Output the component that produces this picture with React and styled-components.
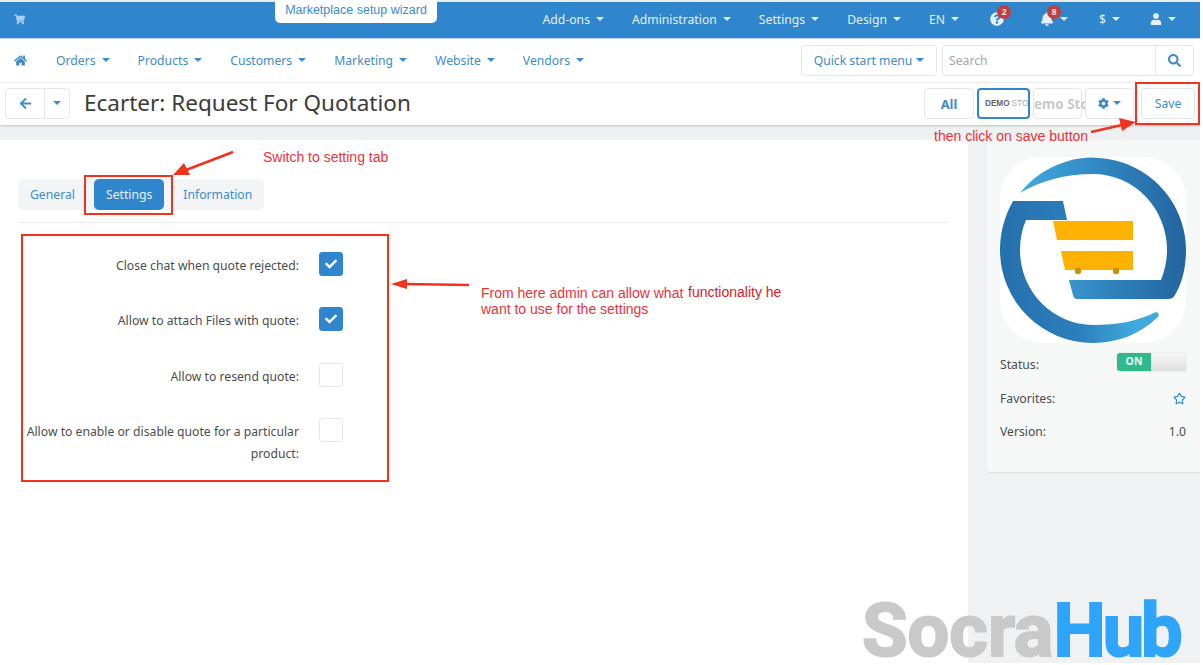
import React from 'react'
import styled, { createGlobalStyle } from 'styled-components'
import {
    FaShoppingCart,
    FaHome,
    FaArrowLeft,
    FaSearch,
    FaCog,
    FaUser,
    FaBell,
    FaQuestionCircle,
    FaCheck,
    FaRegStar,
} from 'react-icons/fa'

const blue = '#2f86cc'
const link = '#3c8ccb'
const red = '#f0321e'

const GlobalStyle = createGlobalStyle`
    html, body {
        margin: 0;
        padding: 0;
        background: #fff;
    }
    body {
        font-family: "Noto Sans", "Open Sans", sans-serif;
        font-size: 12.2px;
        color: #4a4a4a;
    }
`

const Page = styled.div`
    position: relative;
    width: 1200px;
    height: 665px;
    overflow: hidden;
    background: #fff;
`

const TopStrip = styled.div`
    height: 2px;
    background: #e8edf1;
`

const TopBar = styled.header`
    height: 37px;
    padding: 0 24px 2px 14px;
    box-sizing: border-box;
    display: flex;
    align-items: center;
    justify-content: space-between;
    background: ${blue};
    border-bottom: 1px solid #bcd7ee;
    color: #e4eff8;
`

const CartIcon = styled(FaShoppingCart)`
    color: #a8d0ef;
    font-size: 11px;
`

const TopMenu = styled.div`
    display: flex;
    align-items: center;
    gap: 28px;
`

const TopItem = styled.span`
    display: inline-flex;
    align-items: center;
    gap: 6px;
    white-space: nowrap;
    margin-right: ${props => props.$after || 0}px;
`

const Caret = styled.i`
    display: inline-block;
    width: 0;
    height: 0;
    border-left: 4px solid transparent;
    border-right: 4px solid transparent;
    border-top: 4px solid ${props => props.$color || 'currentColor'};
    margin-top: -1px;
`

const IconWrap = styled.span`
    position: relative;
    display: inline-flex;
    font-size: 14px;
`

const Badge = styled.b`
    position: absolute;
    top: -7px;
    left: 7px;
    width: 14px;
    height: 14px;
    border-radius: 50%;
    background: #bf3f3f;
    color: #f5dede;
    font-size: 9px;
    font-weight: 700;
    line-height: 14px;
    text-align: center;
`

const WizardTab = styled.div`
    position: absolute;
    left: 275px;
    top: 0;
    width: 162px;
    height: 23px;
    border-radius: 0 0 5px 5px;
    background: #fff;
    color: ${link};
    font-family: "Liberation Sans", sans-serif;
    font-size: 12.5px;
    line-height: 21px;
    text-align: center;
`

const NavBar = styled.nav`
    height: 44px;
    padding: 0 6px 0 14px;
    box-sizing: border-box;
    display: flex;
    align-items: center;
    gap: 28px;
    border-bottom: 1px solid #f0f0f0;
    color: ${link};
`

const NavItem = styled.span`
    display: inline-flex;
    align-items: center;
    gap: 6px;
    white-space: nowrap;
`

const HomeIcon = styled(FaHome)`
    font-size: 13px;
    margin-right: 1px;
`

const NavRight = styled.div`
    margin: -1px 0 0 auto;
    display: flex;
    gap: 5px;
`

const OutlineButton = styled.div`
    height: 31px;
    padding: 0 ${props => props.$pad || 12}px;
    width: ${props => (props.$width ? `${props.$width}px` : 'auto')};
    box-sizing: border-box;
    display: flex;
    align-items: center;
    justify-content: center;
    gap: 4px;
    overflow: hidden;
    white-space: nowrap;
    border: 1px solid #e4e6e8;
    border-radius: 4px;
    background: #fff;
    color: ${link};
`

const SearchBox = styled.div`
    width: 252px;
    height: 31px;
    box-sizing: border-box;
    display: flex;
    border: 1px solid #e4e6e8;
    border-radius: 4px;
`

const SearchField = styled.span`
    flex: 1;
    padding-left: 6px;
    line-height: 29px;
    color: #a5a5a5;
`

const SearchIcon = styled.span`
    width: 37px;
    display: flex;
    align-items: center;
    justify-content: center;
    border-left: 1px solid #e4e6e8;
    color: ${link};
    font-size: 13px;
`

const ToolBar = styled.div`
    height: 42px;
    box-sizing: border-box;
    padding: 0 5px 1px 5px;
    display: flex;
    align-items: center;
    box-shadow: 0 1px 2px rgba(0, 0, 0, 0.2);
    position: relative;
`

const BackGroup = styled.div`
    width: 65px;
    height: 31px;
    box-sizing: border-box;
    display: flex;
    border: 1px solid #e4e6e8;
    border-radius: 4px;
    color: ${link};
`

const BackPart = styled.span`
    flex: ${props => props.$grow};
    display: flex;
    align-items: center;
    justify-content: center;
    font-size: 13px;
    border-left: ${props => (props.$divided ? '1px solid #e4e6e8' : '0')};
`

const Title = styled.h1`
    margin: 0 0 3px 14px;
    font-size: 22.5px;
    font-weight: 400;
    color: #3b3b3b;
    white-space: nowrap;
`

const ToolActions = styled.div`
    margin-left: auto;
    display: flex;
    gap: 3px;
`

const AllLabel = styled.b`
    font-size: 13px;
    font-weight: 700;
`

const DemoLogo = styled(OutlineButton)`
    border: 2px solid ${blue};
    padding: 0 0 0 6px;
    justify-content: flex-start;
    gap: 2px;
    font-family: "Liberation Sans", sans-serif;
    font-size: 8.2px;
    font-weight: 700;
    color: #666;
`

const DemoFade = styled.span`
    font-weight: 400;
    color: #aaa;
`

const DemoWide = styled(OutlineButton)`
    padding: 0;
    justify-content: flex-start;
    overflow: visible;
    font-size: 13.5px;
    font-weight: 700;
    color: #c9c9c9;
`

const SaveButton = styled(OutlineButton)`
    margin-left: 4px;
`

const Band = styled.div`
    height: 15px;
    background: #eef0f1;
`

const Body = styled.div`
    display: flex;
    height: 523px;
`

const Main = styled.main`
    width: 968px;
    box-sizing: border-box;
    padding: 39px 20px 0 18px;
`

const Tabs = styled.div`
    display: inline-flex;
    align-items: center;
    height: 31px;
    border-radius: 5px;
    background: #f3f4f5;
`

const Tab = styled.span`
    height: 31px;
    padding: 0 12px;
    display: flex;
    align-items: center;
    border-radius: 5px;
    color: ${props => (props.$active ? '#e6f0f9' : link)};
    background: ${props => (props.$active ? blue : 'transparent')};
    margin-right: ${props => (props.$active ? 7 : 0)}px;
    margin-left: ${props => (props.$active ? 7 : 0)}px;
`

const Divider = styled.hr`
    margin: 12px 0 0;
    border: 0;
    border-top: 1px solid #e9eaeb;
`

const Form = styled.div`
    margin-top: 29px;
    width: 325px;
    display: flex;
    flex-direction: column;
    gap: 30.3px;
`

const Row = styled.div`
    display: grid;
    grid-template-columns: 276px 24px;
    column-gap: 20px;
    margin-left: 5px;
`

const Label = styled.label`
    text-align: right;
    line-height: 22px;
    color: #4d4d4d;
    margin-top: 3px;
`

const Check = styled.span`
    width: 24px;
    height: 24px;
    box-sizing: border-box;
    display: flex;
    align-items: center;
    justify-content: center;
    border-radius: 3px;
    font-size: 12px;
    color: #fff;
    background: ${props => (props.$on ? blue : '#fff')};
    border: 1px solid ${props => (props.$on ? blue : '#e6e7e8')};
`

const Sidebar = styled.aside`
    flex: 1;
    padding-left: 19px;
    background: #eff1f2;
`

const Card = styled.div`
    height: 332px;
    box-sizing: border-box;
    padding: 17px 14px 0 13px;
    border-radius: 3px 0 0 3px;
    background: #f6f7f7;
    box-shadow: 0 1px 2px rgba(0, 0, 0, 0.08);
`

const Logo = styled.svg`
    display: block;
    width: 186px;
    height: 186px;
    border-radius: 42px;
    background: #fff;
`

const Meta = styled.div`
    margin-top: ${props => props.$top}px;
    height: 18px;
    display: flex;
    align-items: center;
    justify-content: space-between;
    color: #4d4d4d;
`

const Toggle = styled.div`
    width: 69px;
    height: 18px;
    margin-top: -4px;
    display: flex;
    border-radius: 3px;
    overflow: hidden;
    background: linear-gradient(#f6f6f6, #dfdfdf);
    box-shadow: 0 0 1px rgba(0, 0, 0, 0.4);
`

const ToggleOn = styled.span`
    width: 34px;
    background: #2fba8e;
    color: #e8faf3;
    font-size: 10.5px;
    font-weight: 700;
    line-height: 16px;
    text-align: center;
`

const StarIcon = styled(FaRegStar)`
    color: ${blue};
    font-size: 13px;
`

const RedBox = styled.div`
    position: absolute;
    left: ${props => props.$x}px;
    top: ${props => props.$y}px;
    width: ${props => props.$w}px;
    height: ${props => props.$h}px;
    box-sizing: border-box;
    border: 2.5px solid ${red};
`

const Note = styled.div`
    position: absolute;
    left: ${props => props.$x}px;
    top: ${props => props.$y}px;
    font-family: "Liberation Sans", sans-serif;
    font-size: 14px;
    line-height: 16px;
    white-space: pre;
    color: ${props => props.$color || '#e8343a'};
`

const ArrowLayer = styled.svg`
    position: absolute;
    left: 0;
    top: 0;
    pointer-events: none;
`

const Brand = styled.div`
    position: absolute;
    left: 862px;
    top: 597px;
    font-family: Roboto, sans-serif;
    font-size: 74px;
    font-weight: 700;
    line-height: 68px;
    white-space: nowrap;
    color: #c9c9c9;
    -webkit-text-stroke: 2px currentColor;
`

const BrandBlue = styled.span`
    color: #2fa4fb;
    letter-spacing: -3px;
`

const topItems = ['Add-ons', 'Administration', 'Settings', 'Design']
const navItems = ['Orders', 'Products', 'Customers', 'Marketing', 'Website', 'Vendors']
const rows = [
    { label: 'Close chat when quote rejected:', on: true },
    { label: 'Allow to attach Files with quote:', on: true },
    { label: 'Allow to resend quote:', on: false },
    { label: 'Allow to enable or disable quote for a particular product:', on: false },
]

const Arrows = () => (
    <ArrowLayer width="1200" height="665">
        <g stroke={red} strokeWidth="2.5" fill="none">
            <line x1="233" y1="152" x2="186" y2="170" />
            <line x1="469" y1="285" x2="405" y2="284" />
            <line x1="1091" y1="132" x2="1122" y2="125" />
        </g>
        <g fill={red}>
            <polygon points="173,175 184,163 190,175" />
            <polygon points="391,284 407,279 407,289" />
            <polygon points="1136,122 1119,118 1122,131" />
        </g>
    </ArrowLayer>
)

const EcarterLogo = () => (
    <Logo viewBox="0 0 186 186">
        <defs>
            <linearGradient id="ringTop" x1="0" y1="0" x2="1" y2="0">
                <stop offset="0" stopColor="#42aadd" />
                <stop offset="0.45" stopColor="#3289c4" />
                <stop offset="1" stopColor="#23649f" />
            </linearGradient>
            <linearGradient id="ringBottom" x1="0" y1="0" x2="1" y2="0">
                <stop offset="0" stopColor="#2570ad" />
                <stop offset="0.5" stopColor="#2c7fbc" />
                <stop offset="0.85" stopColor="#41a9dd" />
            </linearGradient>
        </defs>
        <path
            fill="url(#ringTop)"
            d="M20 36 A93 93 0 0 1 186 93 C186 113 181 128 175 138 Q173 142 168 142 L77 142 Q74 142 73 138 L69 123 L161 123 C165 113 167 103 167 93 A74 76 0 0 0 93 17 C65 17 40 24 20 36Z"
        />
        <path
            fill="url(#ringBottom)"
            d="M13 44 L63 44 L67 63 L26 63 C22 72 20 82 20 93 A73 75 0 0 0 93 168 C118 168 138 164 156 155 Q160 156 158 160 C140 177 118 186 93 186 A93 93 0 0 1 0 93 C0 75 5 58 13 44Z"
        />
        <g fill="#fdb100">
            <polygon points="53,64 133,64 133,83 57,83" />
            <polygon points="61,94 133,94 133,113 65,113" />
            <circle cx="78" cy="114" r="3.2" fill="#c98f10" />
            <circle cx="116" cy="114" r="3.2" fill="#c98f10" />
        </g>
    </Logo>
)

export default function App() {
    return (
        <Page>
            <GlobalStyle />
            <TopStrip />
            <TopBar>
                <CartIcon />
                <TopMenu>
                    {topItems.map(item => (
                        <TopItem key={item}>
                            {item}
                            <Caret />
                        </TopItem>
                    ))}
                    <TopItem $after={3}>
                        EN
                        <Caret />
                    </TopItem>
                    <TopItem $after={8}>
                        <IconWrap>
                            <FaQuestionCircle />
                            <Badge>2</Badge>
                        </IconWrap>
                    </TopItem>
                    <TopItem $after={3}>
                        <IconWrap>
                            <FaBell />
                            <Badge>8</Badge>
                        </IconWrap>
                        <Caret />
                    </TopItem>
                    <TopItem $after={2}>
                        $
                        <Caret />
                    </TopItem>
                    <TopItem>
                        <IconWrap>
                            <FaUser size={12} />
                        </IconWrap>
                        <Caret />
                    </TopItem>
                </TopMenu>
            </TopBar>
            <WizardTab>Marketplace setup wizard</WizardTab>

            <NavBar>
                <HomeIcon />
                {navItems.map(item => (
                    <NavItem key={item}>
                        {item}
                        <Caret />
                    </NavItem>
                ))}
                <NavRight>
                    <OutlineButton $width={136}>
                        Quick start menu
                        <Caret />
                    </OutlineButton>
                    <SearchBox>
                        <SearchField>Search</SearchField>
                        <SearchIcon>
                            <FaSearch />
                        </SearchIcon>
                    </SearchBox>
                </NavRight>
            </NavBar>

            <ToolBar>
                <BackGroup>
                    <BackPart $grow={40}>
                        <FaArrowLeft />
                    </BackPart>
                    <BackPart $grow={25} $divided>
                        <Caret />
                    </BackPart>
                </BackGroup>
                <Title>Ecarter: Request For Quotation</Title>
                <ToolActions>
                    <OutlineButton $width={50}>
                        <AllLabel>All</AllLabel>
                    </OutlineButton>
                    <DemoLogo $width={53}>
                        DEMO<DemoFade>STO</DemoFade>
                    </DemoLogo>
                    <DemoWide $width={49}>emo Sto</DemoWide>
                    <OutlineButton $width={49}>
                        <FaCog size={13} />
                        <Caret />
                    </OutlineButton>
                    <SaveButton $width={54}>Save</SaveButton>
                </ToolActions>
            </ToolBar>
            <Band />

            <Body>
                <Main>
                    <Tabs>
                        <Tab>General</Tab>
                        <Tab $active>Settings</Tab>
                        <Tab>Information</Tab>
                    </Tabs>
                    <Divider />
                    <Form>
                        {rows.map(row => (
                            <Row key={row.label}>
                                <Label>{row.label}</Label>
                                <Check $on={row.on}>{row.on && <FaCheck />}</Check>
                            </Row>
                        ))}
                    </Form>
                </Main>
                <Sidebar>
                    <Card>
                        <EcarterLogo />
                        <Meta $top={12}>
                            Status:
                            <Toggle>
                                <ToggleOn>ON</ToggleOn>
                            </Toggle>
                        </Meta>
                        <Meta $top={16}>
                            Favorites:
                            <StarIcon />
                        </Meta>
                        <Meta $top={15}>
                            Version:
                            <span>1.0</span>
                        </Meta>
                    </Card>
                </Sidebar>
            </Body>

            <RedBox $x={1135} $y={82} $w={65} $h={43} />
            <RedBox $x={84} $y={175} $w={89} $h={40} />
            <RedBox $x={21} $y={234} $w={368} $h={248} />
            <Arrows />
            <Note $x={263} $y={149}>Switch to setting tab</Note>
            <Note $x={934} $y={128}>then click on save button</Note>
            <Note $x={481} $y={285}>{'From here admin can allow what\nwant to use for the settings'}</Note>
            <Note $x={688} $y={284} $color="#dd1a1a">functionality he</Note>
            <Brand>
                Socra<BrandBlue>Hub</BrandBlue>
            </Brand>
        </Page>
    )
}
